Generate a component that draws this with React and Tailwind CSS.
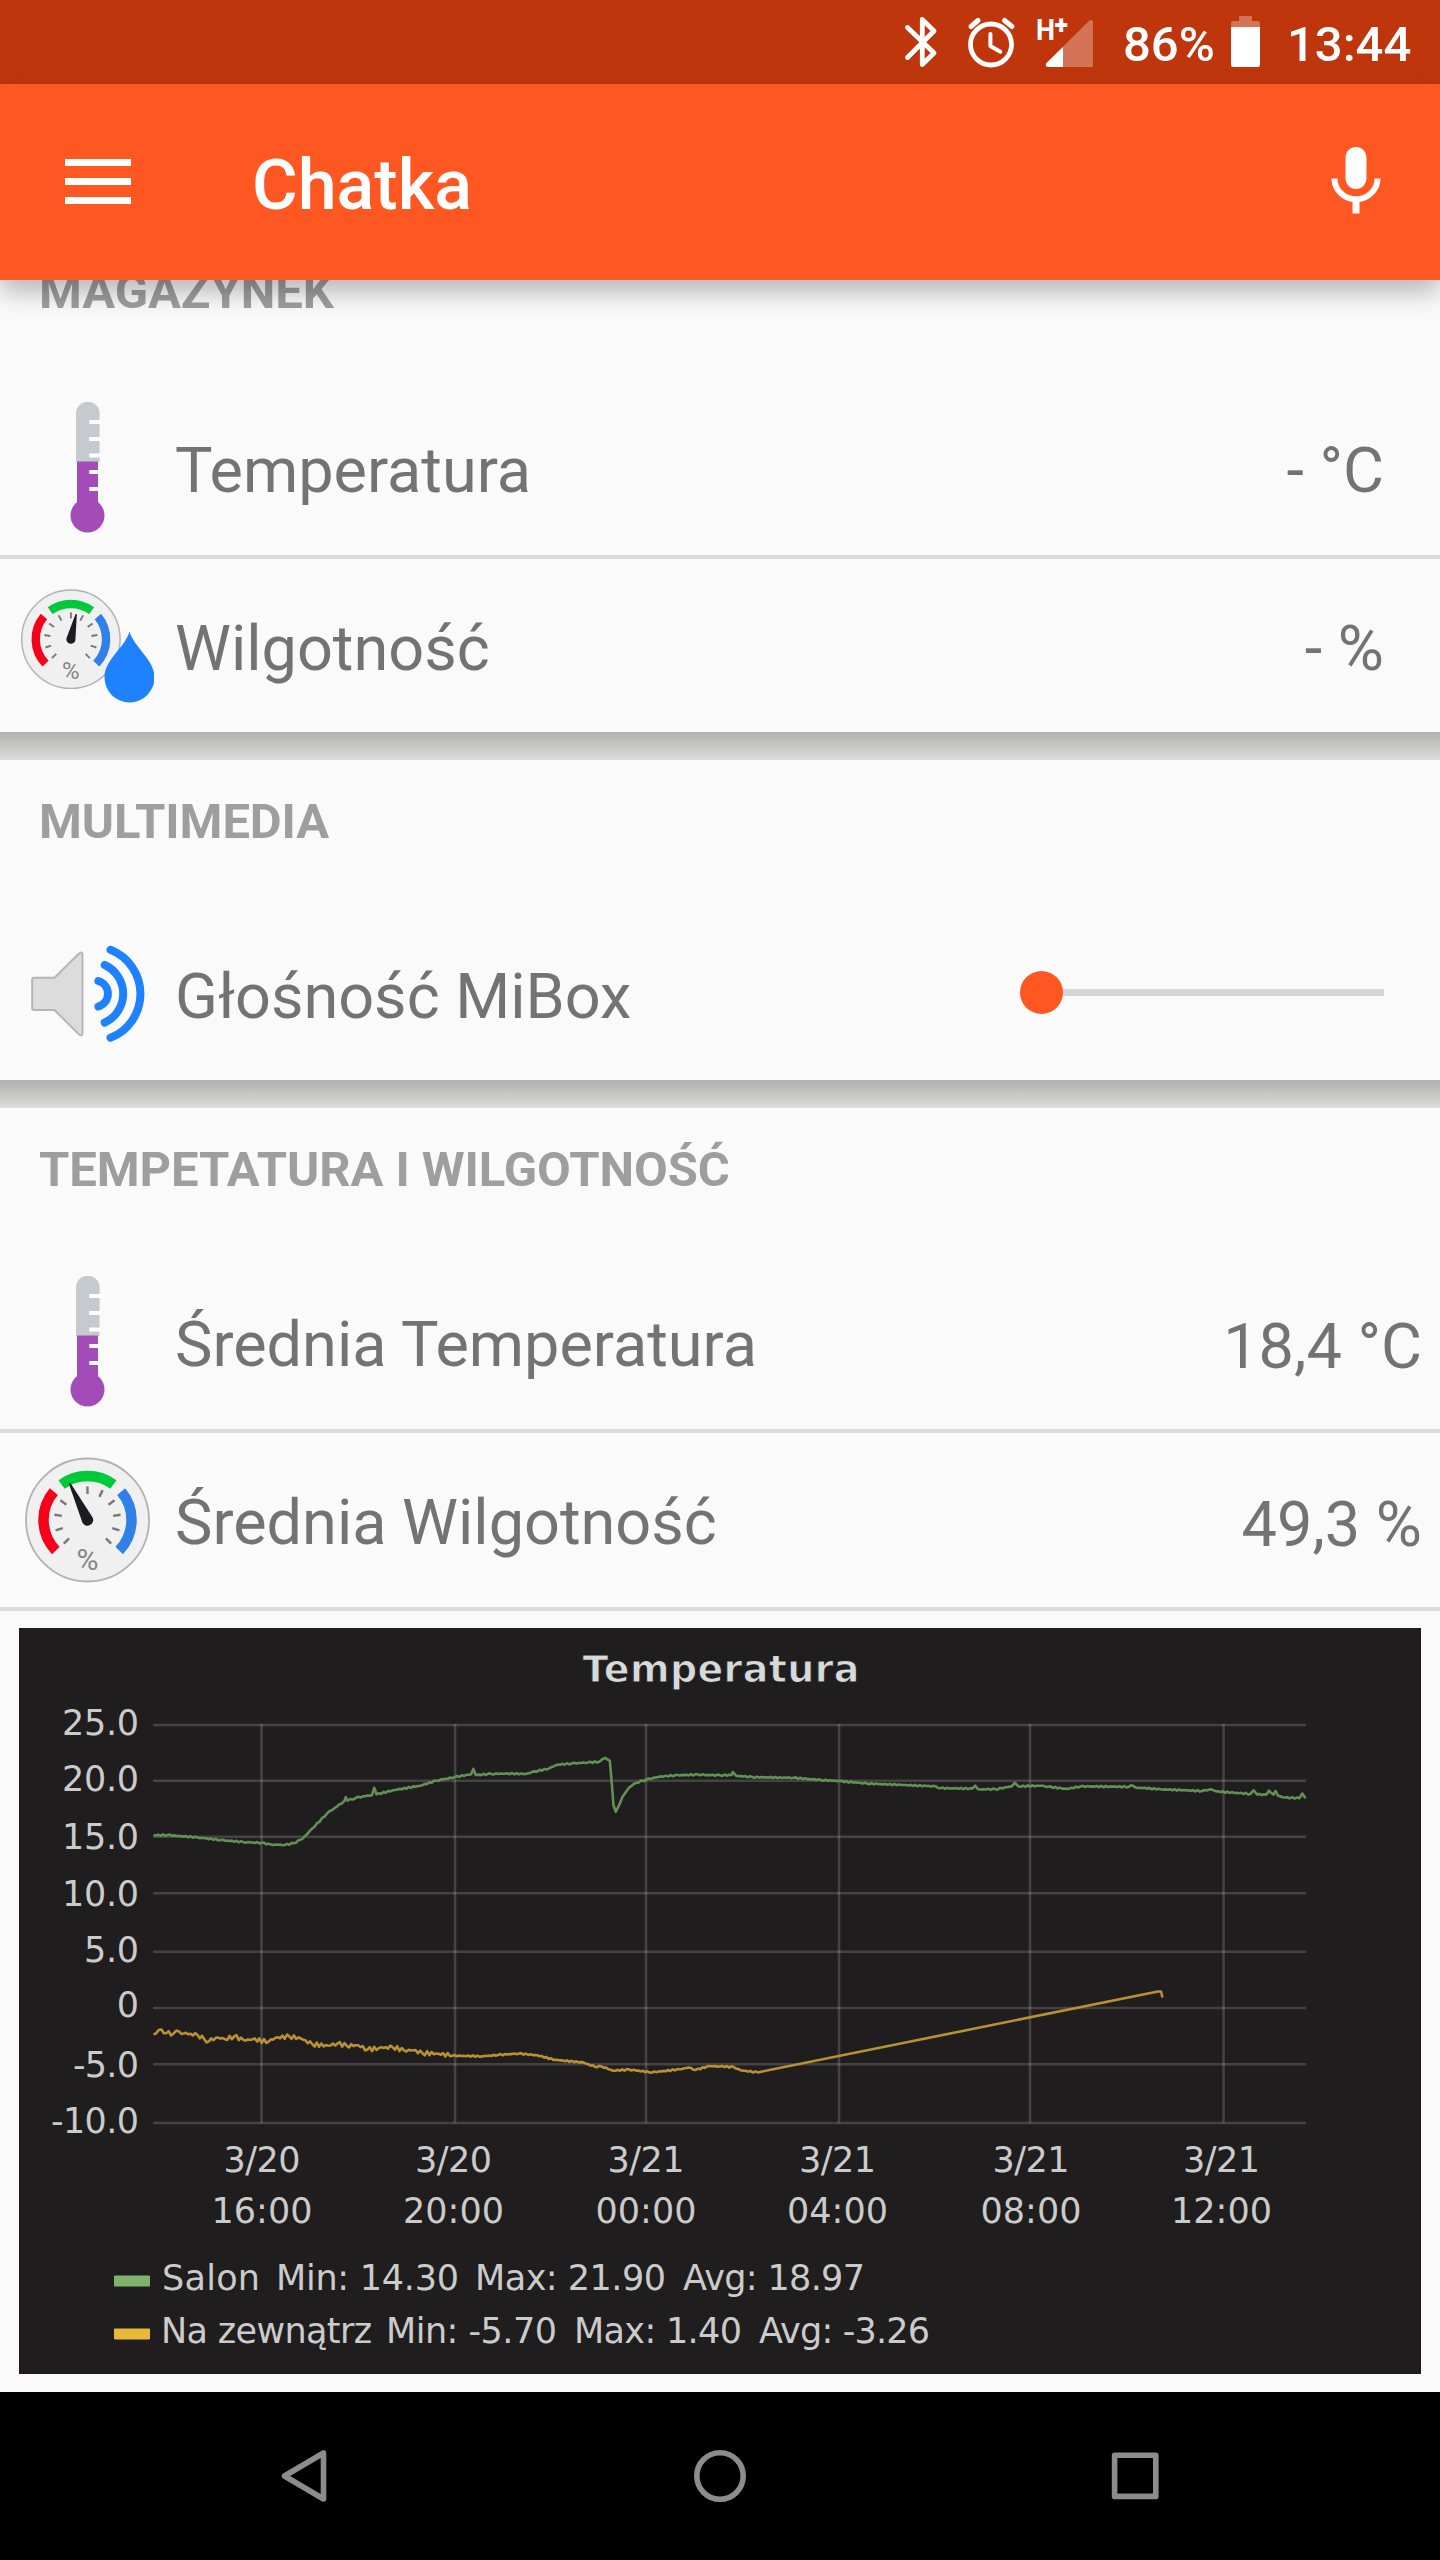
const AXIS_Y = [
  { label: "25.0", line: 1725, text: 1735, width: 77 },
  { label: "20.0", line: 1780.7, text: 1791, width: 77 },
  { label: "15.0", line: 1836.8, text: 1849, width: 77 },
  { label: "10.0", line: 1893.2, text: 1905.5, width: 77 },
  { label: "5.0", line: 1951.8, text: 1961.5, width: 55 },
  { label: "0", line: 2008, text: 2017, width: 22 },
  { label: "-5.0", line: 2064.3, text: 2076.5, width: 66 },
  { label: "-10.0", line: 2123, text: 2132.5, width: 88 },
];

const AXIS_X = [
  { date: "3/20", time: "16:00", x: 261.5, text: 262 },
  { date: "3/20", time: "20:00", x: 455, text: 453.5 },
  { date: "3/21", time: "00:00", x: 646, text: 646 },
  { date: "3/21", time: "04:00", x: 839, text: 837.5 },
  { date: "3/21", time: "08:00", x: 1030, text: 1031 },
  { date: "3/21", time: "12:00", x: 1223.5, text: 1221.5 },
];

const LEGEND = [
  {
    color: "#7eb26d",
    y: 2290,
    parts: [
      ["Salon", 162, 98],
      ["Min: 14.30", 276, 183],
      ["Max: 21.90", 475, 191],
      ["Avg: 18.97", 683, 182],
    ],
  },
  {
    color: "#eab839",
    y: 2343,
    parts: [
      ["Na zewnątrz", 161, 211],
      ["Min: -5.70", 386, 171],
      ["Max: 1.40", 574, 168],
      ["Avg: -3.26", 759, 171],
    ],
  },
];

// raw samples, [time, level]
const SALON = [
  [334, 659], [365, 658], [390, 661], [430, 665], [480, 672], [530, 678],
  [570, 680], [590, 685], [620, 686], [640, 681], [660, 667], [680, 640],
  [712, 598], [750, 563], [753, 552], [757, 562], [775, 554], [810, 546],
  [815, 526], [820, 544], [860, 532], [915, 520], [950, 506], [990, 496],
  [1026, 488], [1031, 473], [1036, 490], [1070, 487], [1100, 486], [1145, 487],
  [1165, 480], [1195, 472], [1215, 461], [1245, 458], [1280, 455], [1305, 453],
  [1318, 442], [1328, 450], [1332, 510], [1336, 575], [1341, 593], [1348, 575],
  [1356, 550], [1370, 525], [1385, 512], [1407, 503], [1435, 495], [1470, 491],
  [1520, 489], [1568, 491], [1593, 490], [1596, 482], [1603, 492], [1638, 496],
  [1728, 498], [1788, 504], [1828, 507], [1888, 514], [1968, 518], [2038, 522],
  [2048, 527], [2118, 528], [2124, 520], [2130, 530], [2168, 530], [2203, 522],
  [2210, 512], [2218, 522], [2268, 520], [2283, 523], [2323, 529], [2353, 522],
  [2458, 523], [2463, 519], [2473, 525], [2528, 530], [2618, 535], [2638, 530],
  [2648, 536], [2723, 543], [2730, 533], [2738, 545], [2758, 545], [2763, 534],
  [2773, 545], [2778, 535], [2783, 548], [2798, 553], [2830, 555], [2836, 542],
  [2843, 555],
];

const OUTSIDE = [
  [334, 1216], [352, 1203], [362, 1213], [378, 1214], [390, 1208], [400, 1214],
  [430, 1218], [445, 1230], [455, 1236], [470, 1226], [490, 1230], [510, 1222],
  [530, 1232], [550, 1230], [585, 1237], [600, 1226], [630, 1222], [655, 1228],
  [680, 1244], [715, 1248], [735, 1242], [755, 1248], [780, 1247], [800, 1259],
  [825, 1255], [855, 1252], [880, 1261], [900, 1261], [920, 1269], [950, 1270],
  [985, 1276], [1050, 1278], [1085, 1274], [1130, 1270], [1170, 1275],
  [1210, 1288], [1270, 1295], [1295, 1307], [1310, 1306], [1335, 1318],
  [1370, 1315], [1420, 1323], [1480, 1314], [1500, 1309], [1515, 1316],
  [1545, 1305], [1568, 1306], [1598, 1308], [1613, 1317], [1650, 1323],
];

function linePoints(samples, noise) {
  const out = [];
  let n = 0;
  for (let i = 0; i < samples.length; i++) {
    const [x, y] = samples[i];
    out.push([x, y]);
    const next = samples[i + 1];
    if (!next) break;
    const steps = Math.floor((next[0] - x) / 5);
    for (let s = 1; s < steps; s++) {
      const t = s / steps;
      const px = x + (next[0] - x) * t;
      n += 1;
      const sign = n % 2 ? 1 : -1;
      const wobble = sign * Math.abs(Math.sin(n * 12.9)) * noise(px);
      out.push([px, y + (next[1] - y) * t + wobble]);
    }
  }
  return out
    .map(
      ([x, y]) => `${(x * 0.4592).toFixed(1)},${(1600 + y * 0.3571).toFixed(1)}`
    )
    .join(" ");
}

const salonLine = linePoints(SALON, () => 2);
const outsideLine =
  linePoints(OUTSIDE, (x) => (x < 980 ? 6 : 2)) +
  " 1158,1991.5 1161,1991.5 1162.5,1997.5";

function Chart() {
  return (
    <svg
      viewBox="19 1628 1402 746"
      className="block h-[746px] w-[1402px] bg-[#1f1d1e]"
      fontFamily="'DejaVu Sans', sans-serif"
      fontSize="35"
      fill="#cbcbcb"
    >
      <text
        x="582.5"
        y="1681.5"
        fontSize="38"
        fontWeight="bold"
        fill="#d8d9da"
        stroke="#1f1d1e"
        textLength="277"
      >
        Temperatura
      </text>
      {AXIS_Y.map((a) => (
        <g key={a.label}>
          <path
            d={`M153 ${a.line}H1306`}
            stroke="#c8c8c8"
            strokeOpacity="0.22"
            strokeWidth="2.6"
          />
          <text x="139" y={a.text} textAnchor="end" textLength={a.width}>
            {a.label}
          </text>
        </g>
      ))}
      {AXIS_X.map((a) => (
        <g key={a.x} textAnchor="middle">
          <path
            d={`M${a.x} 1724V2123`}
            stroke="#c8c8c8"
            strokeOpacity="0.22"
            strokeWidth="2.6"
          />
          <text x={a.text} y="2172" textLength="77">
            {a.date}
          </text>
          <text x={a.text} y="2222.5" textLength="101">
            {a.time}
          </text>
        </g>
      ))}
      <g fill="none" strokeWidth="2.6" strokeLinejoin="round">
        <polyline points={salonLine} stroke="#629055" />
        <polyline points={outsideLine} stroke="#b99132" />
      </g>
      {LEGEND.map((row) => (
        <g key={row.color}>
          <rect
            x="114"
            y={row.y - 14.5}
            width="36"
            height="11"
            rx="1"
            fill={row.color}
          />
          {row.parts.map(([text, x, width]) => (
            <text key={text} x={x} y={row.y} textLength={width}>
              {text}
            </text>
          ))}
        </g>
      ))}
    </svg>
  );
}

function Thermometer() {
  return (
    <svg viewBox="0 0 133 133" className="size-[133px]">
      <path d="M55 60V11.5a11.8 11.8 0 0 1 23.6 0V60z" fill="#c4cacd" />
      <path d="M56 59.5h21V110H56z" fill="#a34bb6" />
      <circle cx="66.5" cy="113.5" r="17" fill="#a34bb6" />
      <path
        d="M68.3 20H80M68.3 37H80M68.3 53.5H80M68.3 70H80M68.3 87H80"
        stroke="#fff"
        strokeWidth="4"
      />
    </svg>
  );
}

const TICKS = [-135, -108, -81, -54, -27, 0, 27, 54, 81, 108, 135];

function Dial({ angle, length }) {
  return (
    <>
      <circle
        cx="66.5"
        cy="66.5"
        r="61.5"
        fill="#f0f0f0"
        stroke="#b2b2b2"
        strokeWidth="1.8"
      />
      <g fill="none" strokeWidth="10.5">
        <path d="M40.6 30.9A44 44 0 0 1 92.4 30.9" stroke="#00c93a" />
        <path d="M34.8 97A44 44 0 0 1 32.8 38.2" stroke="#f8001c" />
        <path d="M98.2 97A44 44 0 0 0 100.2 38.2" stroke="#2f80e8" />
      </g>
      {TICKS.map((t) => (
        <path
          key={t}
          d="M66.5 33v7.5"
          stroke="#777"
          strokeWidth="2.4"
          transform={`rotate(${t} 66.5 66.5)`}
        />
      ))}
      <path
        d={`M60.8 66.5L${66.5 - 0.8} ${66.5 - length}h1.6L72.2 66.5a5.7 5.7 0 0 1-11.4 0z`}
        fill="#1c1c1e"
        transform={`rotate(${angle} 66.5 66.5)`}
      />
      <text
        x="66.5"
        y="116"
        textAnchor="middle"
        fontSize="30"
        fill="#858585"
        fontFamily="Roboto, sans-serif"
      >
        %
      </text>
    </>
  );
}

function Humidity() {
  return (
    <svg viewBox="0 0.5 133 133" className="size-[133px]">
      <Dial angle={-26} length={41} />
    </svg>
  );
}

function HumidityDrop() {
  return (
    <svg viewBox="0 0.5 133 133" className="size-[133px]">
      <g transform="translate(-3.3 6.5) scale(0.8)">
        <Dial angle={12} length={32} />
      </g>
      <path
        d="M108.5 52C113 68 133.5 80 133.5 98a25 25 0 0 1-50 0C83.5 80 104 68 108.5 52z"
        fill="#1e82ff"
      />
    </svg>
  );
}

function Speaker() {
  return (
    <svg viewBox="0 0 133 133" className="size-[133px]" fill="none">
      <path
        d="M13 49.7H33.5L57.5 26Q61.5 22.5 61.5 27V105Q61.5 109.5 57.5 106L33.5 82H13Q11.2 82 11.2 80V51.7Q11.2 49.7 13 49.7z"
        fill="#dcdcdc"
        stroke="#b5b5b5"
        strokeWidth="2"
      />
      <g stroke="#1e82ff" strokeWidth="8" strokeLinecap="round">
        <path d="M77.4 53A13.3 13.3 0 0 1 77.4 78.5" />
        <path d="M83.7 37A31.6 31.6 0 0 1 83.7 94.5" />
        <path d="M89.5 21.8A47.3 47.3 0 0 1 89.5 109.8" />
      </g>
    </svg>
  );
}

function StatusBar() {
  return (
    <div className="flex h-[84px] items-start bg-[#bf360c] text-[49px] leading-[89px] font-medium text-white">
      <svg viewBox="900 0 200 84" className="ml-[900px] h-[84px] w-[200px]">
        <g
          fill="none"
          stroke="#fff"
          strokeLinecap="round"
          strokeLinejoin="round"
          strokeWidth="4.8"
        >
          <path d="M907.5 27.5L934 53L922.3 64.5V19.5L934 31L907.5 57.5" />
          <path d="M971 26.5L978 20.5M1004.5 20.5L1012 26.5" strokeWidth="5" />
          <circle cx="991" cy="44.5" r="20.5" />
          <path d="M990.4 34V46L1000.3 51.8" strokeWidth="4" />
        </g>
        <path
          d="M1093 21.5V65.5Q1093 67 1091.5 67H1048Q1044.5 66 1046.5 63L1089.5 20.5Q1092 19 1093 21.5z"
          fill="#fff"
          fillOpacity="0.31"
        />
        <path d="M1063 47V67H1048Q1044.5 66 1046.5 63z" fill="#fff" />
        <text
          x="1036"
          y="39.5"
          fontSize="29"
          fontWeight="700"
          fill="#fff"
          textLength="19"
          lengthAdjust="spacingAndGlyphs"
        >
          H
        </text>
        <text x="1054.5" y="33.5" fontSize="25" fontWeight="900" fill="#fff">
          +
        </text>
      </svg>
      <span className="ml-[23px] w-[108px]">86%</span>
      <svg viewBox="0 0 29 51" className="mt-4 h-[51px] w-[29px]" fill="#fff">
        <path
          d="M8 0h13v5h6q2 0 2 2v4H0V7q0-2 2-2h6z"
          fillOpacity="0.31"
        />
        <path d="M0 11h29v38q0 2-2 2H2q-2 0-2-2z" />
      </svg>
      <span className="ml-[27px]">13:44</span>
    </div>
  );
}

function AppBar() {
  return (
    <header className="relative z-10 flex h-[196px] items-center bg-[#ff5722] pl-[65px] shadow-[0_12px_24px_rgba(0,0,0,0.27)]">
      <div className="-mt-0.5 flex flex-col gap-3">
        <div className="h-[7px] w-[66px] bg-white" />
        <div className="h-[7px] w-[66px] bg-white" />
        <div className="h-[7px] w-[66px] bg-white" />
      </div>
      <h1 className="ml-[121px] pt-1.5 text-[70px] leading-none font-medium text-white">
        Chatka
      </h1>
      <svg
        viewBox="0 0 24 24"
        className="mr-[42px] ml-auto size-[84px]"
        fill="#fff"
      >
        <path d="M12 14c1.66 0 2.99-1.34 2.99-3L15 5c0-1.66-1.34-3-3-3S9 3.34 9 5v6c0 1.66 1.34 3 3 3zm7-3h-1.7c0 3-2.54 5.1-5.3 5.1S6.7 14 6.7 11H5c0 3.41 2.72 6.23 6 6.72V21h2v-3.28c3.28-.48 6-3.3 6-6.72z" />
      </svg>
    </header>
  );
}

function SectionTitle({ children }) {
  return (
    <h2 className="h-[147px] pt-[33px] pl-[39px] text-[49px] leading-[57px] font-bold tracking-[-0.08px] text-[#9e9e9e]">
      {children}
    </h2>
  );
}

function Row({ icon, label, children }) {
  return (
    <div className="flex h-[174px] items-center pl-[21px] text-[63px] leading-[74px] text-[#737373]">
      {icon}
      <span className="ml-[21px] pt-[5px]">{label}</span>
      <div className="ml-auto">{children}</div>
    </div>
  );
}

function Divider() {
  return <div className="h-1 bg-[#dcdcdc]" />;
}

function Gap() {
  return <div className="h-7 bg-linear-to-b from-[#b1b1af] to-[#dcdcda]" />;
}

function NavBar() {
  return (
    <nav className="h-[168px] bg-black">
      <svg
        viewBox="0 0 1440 168"
        className="h-[168px] w-[1440px]"
        fill="none"
        stroke="#8c8c8c"
        strokeWidth="5.6"
        strokeLinejoin="round"
      >
        <path d="M284.5 84L323.5 61V107z" />
        <circle cx="720" cy="84" r="23.2" />
        <rect x="1114.6" y="63.2" width="41.2" height="41.2" />
      </svg>
    </nav>
  );
}

export default function App() {
  return (
    <div className="h-[2560px] w-[1440px] overflow-hidden bg-[#fafafa] font-[Roboto,sans-serif]">
      <StatusBar />
      <AppBar />

      <section className="-mt-[50px]">
        <div className="h-[151px]">
          <SectionTitle>MAGAZYNEK</SectionTitle>
        </div>
        <Row icon={<Thermometer />} label="Temperatura">
          <p className="mr-14 pt-1.5">- °C</p>
        </Row>
        <Divider />
        <div className="h-[173px]">
          <Row icon={<HumidityDrop />} label="Wilgotność">
            <p className="mr-14 pt-1.5">- %</p>
          </Row>
        </div>
      </section>
      <Gap />

      <section className="h-[320px]">
        <SectionTitle>MULTIMEDIA</SectionTitle>
        <Row icon={<Speaker />} label="Głośność MiBox">
          <div className="mr-14 flex w-[364px] items-center pb-[3px]">
            <div className="size-[43px] rounded-full bg-[#ff5722]" />
            <div className="h-[7px] grow bg-[#d6d6d6]" />
          </div>
        </Row>
      </section>
      <Gap />

      <section className="h-[1284px]">
        <SectionTitle>TEMPETATURA I WILGOTNOŚĆ</SectionTitle>
        <Row icon={<Thermometer />} label="Średnia Temperatura">
          <p className="mr-[18px] pt-[9px]">18,4 °C</p>
        </Row>
        <Divider />
        <Row icon={<Humidity />} label="Średnia Wilgotność">
          <p className="mr-[18px] pt-[9px]">49,3 %</p>
        </Row>
        <Divider />
        <div className="pt-[17px] pl-[19px]">
          <Chart />
        </div>
      </section>
      <NavBar />
    </div>
  );
}
